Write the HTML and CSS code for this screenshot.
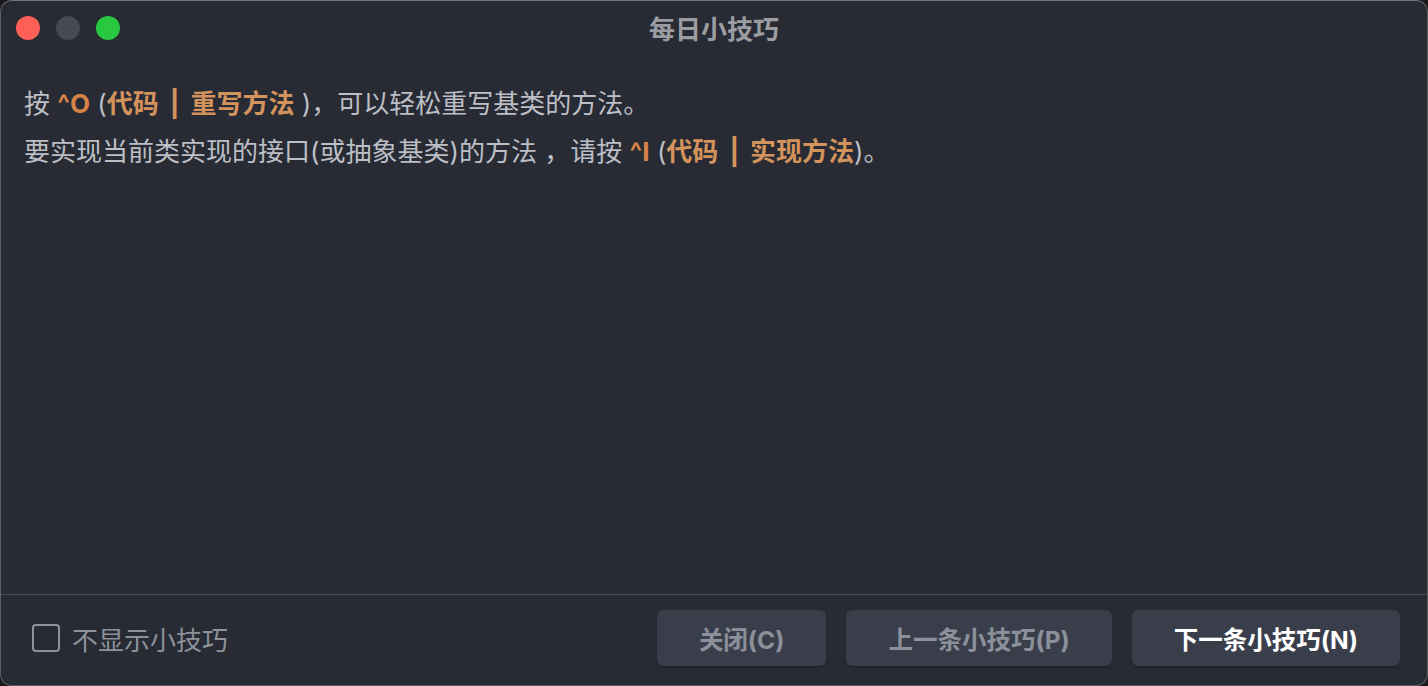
FILE: index.html
```html
<!DOCTYPE html>
<html lang="zh-CN">
<head>
  <meta charset="UTF-8" />
  <title>每日小技巧</title>
  <link rel="stylesheet" href="styles.css">
</head>
<body>

  <div class="window">
    <div class="titlebar">
      <div class="lights">
        <span class="light red"></span>
        <span class="light idle"></span>
        <span class="light green"></span>
      </div>
      <div class="title">每日小技巧</div>
    </div>

    <div class="tip">
      <p>按 <span class="key">^O</span> (<span class="hl">代码<span class="sep">|</span>重写方法</span> )，可以轻松重写基类的方法。</p>
      <p>要实现当前类实现的接口(或抽象基类)的方法 ，请按 <span class="key">^I</span> (<span class="hl">代码<span class="sep">|</span>实现方法</span>)。</p>
    </div>

    <div class="footer">
      <label class="check">
        <span class="box"></span>
        不显示小技巧
      </label>
      <div class="buttons">
        <button type="button" class="btn">关闭(C)</button>
        <button type="button" class="btn">上一条小技巧(P)</button>
        <button type="button" class="btn primary">下一条小技巧(N)</button>
      </div>
    </div>
  </div>

</body>
</html>
```

FILE: styles.css
```css
html, body {
  margin: 0;
  height: 100%;
  background-color: #1a1a1a;
}
body {
  font-family: "Inter", "Noto Sans CJK SC", sans-serif;
}
.window {
  box-sizing: border-box;
  height: 686px;
  display: flex;
  flex-direction: column;
  background-color: #282b34;
  border: 1px solid #5c5e63;
  border-top-color: #707276;
  border-radius: 12px;
  overflow: hidden;
}

/* Title bar */
.titlebar {
  position: relative;
  height: 55px;
  display: flex;
  align-items: center;
  justify-content: center;
}
.lights {
  position: absolute;
  left: 15px;
  top: 15px;
  display: flex;
  gap: 16px;
}
.light {
  width: 24px;
  height: 24px;
  border-radius: 50%;
}
.light.red { background-color: #fe5f57; }
.light.idle { background-color: #464951; }
.light.green { background-color: #28c840; }
.title {
  font-size: 26px;
  font-weight: bold;
  color: #9b9da2;
  margin-top: -3px;
}

/* Tip text */
.tip {
  flex: 1;
  padding: 24px 23px 0;
}
.tip p {
  margin: 0;
  font-size: 26px;
  line-height: 48px;
  color: #bcbfc5;
}
.key {
  font-weight: bold;
  color: #d8824a;
}
.hl {
  font-weight: bold;
  color: #d3935c;
}
.sep {
  padding: 0 11px;
}

/* Footer */
.footer {
  height: 91px;
  box-sizing: border-box;
  border-top: 1px solid #4a4c52;
  display: flex;
  align-items: center;
  justify-content: space-between;
  padding: 0 27px 4px 31px;
}
.check {
  display: flex;
  align-items: center;
  gap: 12px;
  font-size: 26px;
  color: #8d929b;
}
.box {
  box-sizing: border-box;
  width: 28px;
  height: 28px;
  border: 2px solid #8d929b;
  border-radius: 4px;
}
.buttons {
  display: flex;
  gap: 20px;
}
.btn {
  height: 56px;
  padding: 0 42px;
  border: none;
  border-radius: 6px;
  background-color: #3a3e4b;
  color: #8b909a;
  font-family: "Inter", "Noto Sans CJK SC", sans-serif;
  font-size: 24.5px;
  font-weight: bold;
  box-shadow: 0 1px 2px rgba(0, 0, 0, 0.3);
}
.btn.primary {
  color: #ffffff;
}
```
